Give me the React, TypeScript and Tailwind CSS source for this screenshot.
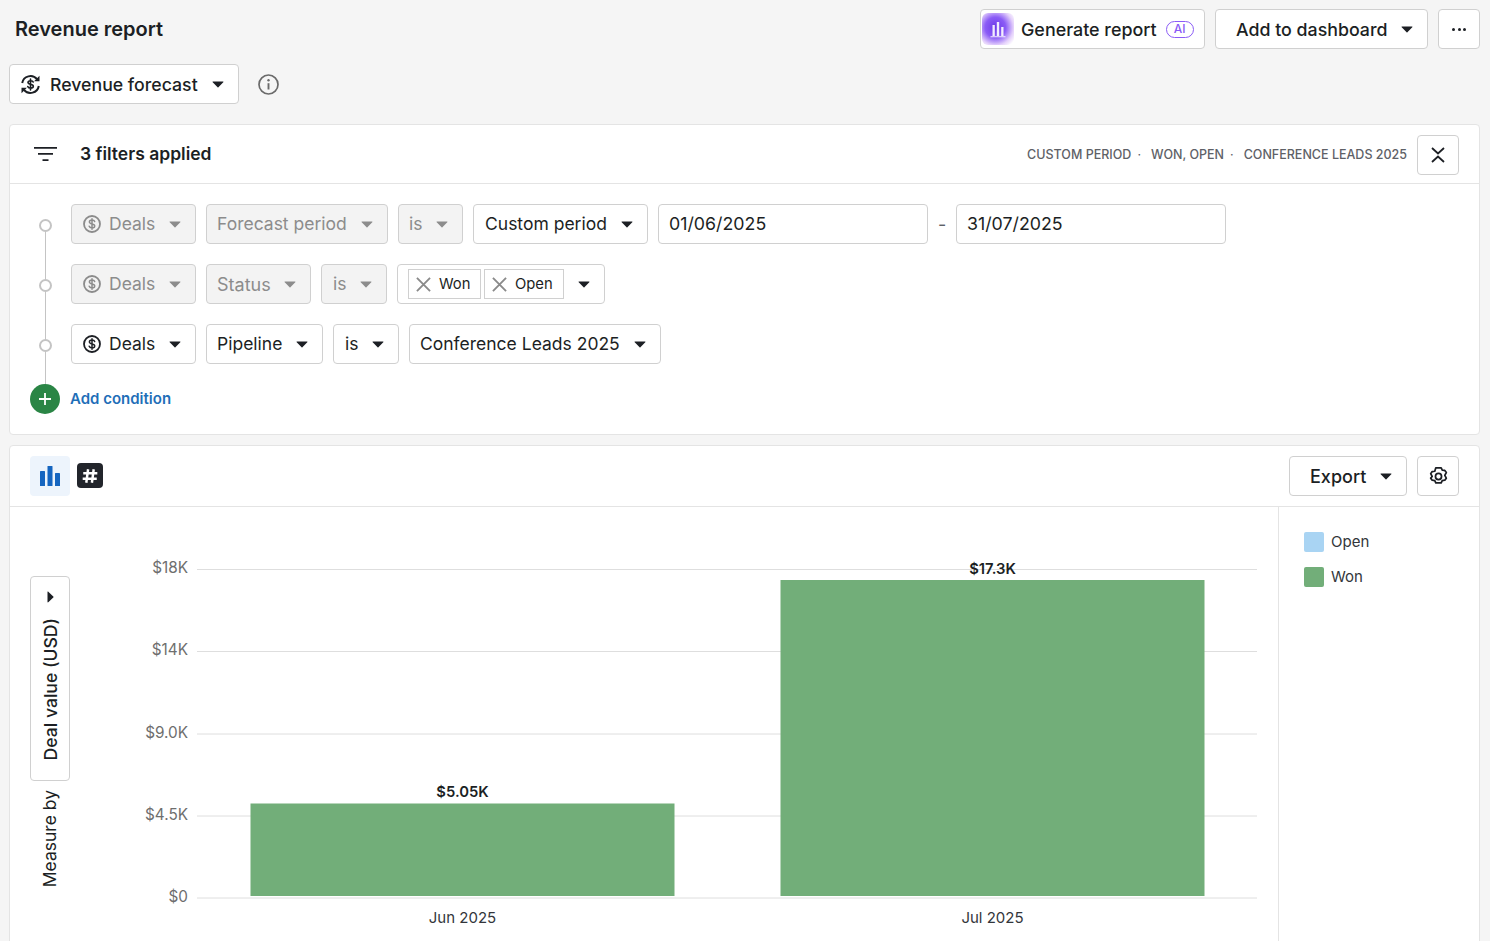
import React from "react";

const Caret = ({ muted = false }: { muted?: boolean }) => (
  <svg width="12" height="7" viewBox="0 0 12 7" className="shrink-0">
    <path d="M1 .5h10c.4 0 .6.5.3.8L6.400 6.200a.6.6 0 0 1-.8 0L.7 1.300C.4 1 .6.5 1 .5z" fill={muted ? "#8c8c8c" : "#1c1f24"} />
  </svg>
);

const DollarCircle = ({ muted = false }: { muted?: boolean }) => {
  const c = muted ? "#8c8c8c" : "#1c1f24";
  return (
    <svg width="18" height="18" viewBox="0 0 18 18" fill="none" className="shrink-0">
      <circle cx="9" cy="9" r="8" stroke={c} strokeWidth="1.800" />
      <path d="M11.700 6.600c-.3-.9-1.300-1.500-2.700-1.500-1.500 0-2.600.8-2.600 1.900 0 2.600 5.300 1.300 5.300 3.900 0 1.200-1.200 2-2.700 2-1.400 0-2.500-.6-2.800-1.600M9 3.700v10.600" stroke={c} strokeWidth="1.500" strokeLinecap="round" />
    </svg>
  );
};

const Pill = ({ children, muted = false, className = "" }: { children: React.ReactNode; muted?: boolean; className?: string }) => (
  <div
    className={
      "h-10 flex items-center rounded border border-[#d0d0d0] text-[17.5px] shrink-0 " +
      (muted ? "bg-[#f3f3f3] text-[#8c8c8c] " : "bg-white text-[#1c1f24] ") +
      className
    }
  >
    {children}
  </div>
);

const Dot = () => <div className="w-[13px] h-[13px] rounded-full border-2 border-[#c4c4c4] bg-white shrink-0" />;

const X = ({ size = 15, color = "#8a8a8a", w = 2 }: { size?: number; color?: string; w?: number }) => (
  <svg width={size} height={size} viewBox="0 0 16 16" fill="none" className="shrink-0">
    <path d="M1 1l14 14M15 1L1 15" stroke={color} strokeWidth={w} />
  </svg>
);

const Row = ({ children, mb = true }: { children: React.ReactNode; mb?: boolean }) => (
  <div className={"flex items-center gap-2.5 " + (mb ? "mb-5" : "")}>{children}</div>
);

const Chart = () => {
  const ticks = [
    ["$18K", 570, 573],
    ["$14K", 652, 655],
    ["$9.0K", 734, 738],
    ["$4.5K", 816, 820],
    ["$0", 898, 902],
  ] as const;
  return (
    <svg width="1208" height="434" viewBox="70 507 1208 434" className="block shrink-0" style={{ fontFamily: "Inter, sans-serif" }}>
      {ticks.map(([t, y, ty]) => (
        <g key={t}>
          <line x1="197" x2="1257" y1={y - 0.5 + (y > 700 ? 0.5 : 0)} y2={y - 0.5 + (y > 700 ? 0.5 : 0)} stroke="#dedede" strokeWidth="1" />
          <text x="188" y={ty} textAnchor="end" fontSize="15.300" fill="#6e6e6e">{t}</text>
        </g>
      ))}
      <rect x="250.500" y="803.500" width="424" height="92.500" fill="#72ae79" />
      <rect x="780.500" y="580" width="424" height="316" fill="#72ae79" />
      <text x="462.500" y="797" textAnchor="middle" fontSize="14.800" fontWeight="600" fill="#1c1f24">$5.05K</text>
      <text x="992.500" y="574" textAnchor="middle" fontSize="14.800" fontWeight="600" fill="#1c1f24">$17.3K</text>
      <text x="462.500" y="923" textAnchor="middle" fontSize="15" fill="#33363b">Jun 2025</text>
      <text x="992.500" y="923" textAnchor="middle" fontSize="15" fill="#33363b">Jul 2025</text>
    </svg>
  );
};

export default function App() {
  return (
    <div className="w-[1490px] h-[941px] overflow-hidden bg-[#f5f5f5] text-[#1c1f24] font-['Inter',sans-serif]">
      {/* Title row */}
      <div className="flex items-center pt-[9px] pl-[15px] pr-[10px] h-[49px]">
        <h1 className="text-[20px] font-semibold leading-none flex-1">Revenue report</h1>
        <div className="flex items-center gap-2.5">
          <div className="h-10 w-[225px] flex items-center rounded border border-[#d0d0d0] bg-white font-medium text-[17.900px] pl-[1px]">
            <div className="w-[32px] h-[32px] rounded-[6px] bg-[radial-gradient(circle_at_42%_45%,#6d3ae8_0%,#8b5cf6_40%,#e4d0fb_70%,#ffffff_90%)] flex items-center justify-center shrink-0">
              <svg width="18" height="18" viewBox="0 0 18 18">
                <path d="M3.500 5h2.300v11H3.500zM7.800 2h2.400v14H7.800zM12.200 7h2.300v9h-2.300zM1.500 16.200h15v1h-15z" fill="#fff" opacity=".9" />
              </svg>
            </div>
            <span className="ml-[7px] pt-[2px]">Generate report</span>
            <span className="ml-[9px] w-[28px] h-[17px] rounded-full border border-[#8b5cf6] text-[#8b5cf6] text-[12px] font-medium flex items-center justify-center leading-none">AI</span>
          </div>
          <div className="h-10 w-[213px] flex items-center justify-between rounded border border-[#d0d0d0] bg-white font-medium text-[17.800px] pl-[20px] pr-[14px]">
            <span className="pt-[2px]">Add to dashboard</span>
            <Caret />
          </div>
          <div className="h-10 w-[42px] flex items-center justify-center rounded border border-[#d0d0d0] bg-white gap-[2.500px]">
            <span className="w-[3px] h-[3px] rounded-full bg-[#1c1f24]" />
            <span className="w-[3px] h-[3px] rounded-full bg-[#1c1f24]" />
            <span className="w-[3px] h-[3px] rounded-full bg-[#1c1f24]" />
          </div>
        </div>
      </div>

      {/* Report type row */}
      <div className="flex items-center gap-[19px] mt-[15px] pl-[9px]">
        <div className="h-10 w-[230px] flex items-center rounded border border-[#d0d0d0] bg-white font-medium text-[17.700px] pl-[10px] pr-[14px]">
          <svg width="21" height="21" viewBox="0 0 21 21" fill="none" className="shrink-0">
            <path d="M2.200 9a8.400 8.400 0 0 1 14.800-3.800M18.800 12a8.400 8.400 0 0 1-14.800 3.800" stroke="#1c1f24" strokeWidth="2" />
            <path d="M19.500 1.800v5.400h-5.400zM1.500 19.200v-5.400h5.400z" fill="#1c1f24" />
            <path d="M13.200 8c-.3-.9-1.300-1.300-2.600-1.300-1.500 0-2.600.7-2.600 1.800 0 2.400 5.300 1.200 5.300 3.700 0 1.200-1.200 1.900-2.700 1.900-1.400 0-2.400-.6-2.800-1.500M10.500 5v11" stroke="#1c1f24" strokeWidth="1.600" strokeLinecap="round" />
          </svg>
          <span className="ml-[9px] flex-1 pt-[2px]">Revenue forecast</span>
          <Caret />
        </div>
        <svg width="21" height="21" viewBox="0 0 21 21" fill="none">
          <circle cx="10.500" cy="10.500" r="9.500" stroke="#6a6a6a" strokeWidth="1.700" />
          <path d="M10.500 9.200v6.300" stroke="#6a6a6a" strokeWidth="1.900" />
          <circle cx="10.500" cy="6.300" r="1.200" fill="#6a6a6a" />
        </svg>
      </div>

      {/* Filter card */}
      <section className="mt-5 mx-[9px] w-[1471px] h-[311px] bg-white border border-[#e4e4e4] rounded">
        <div className="h-[59px] flex items-center border-b border-[#e4e4e4] pl-6 pr-5">
          <svg width="23" height="16" viewBox="0 0 23 16" className="shrink-0">
            <path d="M0 1h23v1.800H0zM4 7h15v1.800H4zM8.500 13.200h6V15h-6z" fill="#1c1f24" />
          </svg>
          <span className="ml-[23px] text-[17.500px] font-semibold flex-1">3 filters applied</span>
          <span className="text-[12.500px] font-medium text-[#5e6167] mt-[2px]">CUSTOM PERIOD</span>
          <span className="text-[12.500px] text-[#5e6167] mt-[2px] mx-[6px]">·</span>
          <span className="text-[12.500px] font-medium text-[#5e6167] mt-[2px] ml-[4px]">WON, OPEN</span>
          <span className="text-[12.500px] text-[#5e6167] mt-[2px] mx-[6px]">·</span>
          <span className="text-[12.500px] font-medium text-[#5e6167] mt-[2px] ml-[4px]">CONFERENCE LEADS 2025</span>
          <div className="ml-[10px] mt-[2px] w-[42px] h-10 rounded border border-[#d0d0d0] flex items-center justify-center">
            <svg width="14" height="16" viewBox="0 0 14 16" fill="none">
              <path d="M1 1l6 5.500 6-5.500M1 15l6-5.500 6 5.500" stroke="#1c1f24" strokeWidth="1.800" />
            </svg>
          </div>
        </div>

        <div className="flex pt-5 pl-5">
          {/* Timeline rail */}
          <div className="relative w-[30px] shrink-0 flex flex-col items-center mr-[11px] h-[210px]">
            <div className="absolute left-[15px] top-[22px] bottom-[16px] w-px bg-[#c4c4c4]" />
            <div className="relative mt-[15px]"><Dot /></div>
            <div className="relative mt-[47px]"><Dot /></div>
            <div className="relative mt-[47px]"><Dot /></div>
            <div className="relative mt-[32px] w-[30px] h-[30px] rounded-full bg-[#2a8545] flex items-center justify-center">
              <svg width="14" height="14" viewBox="0 0 14 14"><path d="M7 1v12M1 7h12" stroke="#fff" strokeWidth="1.800" /></svg>
            </div>
          </div>

          <div className="flex-1">
            <Row>
              <Pill muted className="w-[125px] pl-[11px] pr-[14px]"><DollarCircle muted /><span className="ml-[8px] flex-1">Deals</span><Caret muted /></Pill>
              <Pill muted className="w-[182px] pl-[10px] pr-[14px]"><span className="flex-1">Forecast period</span><Caret muted /></Pill>
              <Pill muted className="w-[65px] pl-[10px] pr-[14px]"><span className="flex-1">is</span><Caret muted /></Pill>
              <Pill className="w-[175px] pl-[11px] pr-[14px]"><span className="flex-1">Custom period</span><Caret /></Pill>
              <Pill className="w-[270px] pl-[10px] text-[17.800px]">01/06/2025</Pill>
              <span className="text-[18px] text-[#5e6167] w-[8px] text-center">-</span>
              <Pill className="w-[270px] pl-[10px] text-[17.800px]">31/07/2025</Pill>
            </Row>
            <Row>
              <Pill muted className="w-[125px] pl-[11px] pr-[14px]"><DollarCircle muted /><span className="ml-[8px] flex-1">Deals</span><Caret muted /></Pill>
              <Pill muted className="w-[105px] pl-[10px] pr-[14px]"><span className="flex-1 text-[18px]">Status</span><Caret muted /></Pill>
              <Pill muted className="w-[66px] pl-[11px] pr-[14px]"><span className="flex-1">is</span><Caret muted /></Pill>
              <Pill className="w-[208px] pl-[10px] pr-[14px]">
                <div className="h-[30px] w-[73px] border border-[#d0d0d0] flex items-center pl-[7px] text-[14.800px] shrink-0"><X /><span className="ml-[8px]">Won</span></div>
                <div className="h-[30px] w-[80px] border border-[#d0d0d0] flex items-center pl-[7px] text-[14.800px] shrink-0 ml-[3px]"><X /><span className="ml-[8px]">Open</span></div>
                <span className="flex-1" />
                <Caret />
              </Pill>
            </Row>
            <Row>
              <Pill className="w-[125px] pl-[11px] pr-[14px]"><DollarCircle /><span className="ml-[8px] flex-1">Deals</span><Caret /></Pill>
              <Pill className="w-[117px] pl-[10px] pr-[14px]"><span className="flex-1">Pipeline</span><Caret /></Pill>
              <Pill className="w-[66px] pl-[11px] pr-[14px]"><span className="flex-1">is</span><Caret /></Pill>
              <Pill className="w-[252px] pl-[10px] pr-[14px]"><span className="flex-1">Conference Leads 2025</span><Caret /></Pill>
            </Row>
            <div className="h-[30px] -ml-px flex items-center text-[15px] font-semibold text-[#1f6fb8]">Add condition</div>
          </div>
        </div>
      </section>

      {/* Chart card */}
      <section className="mt-[10px] mx-[9px] w-[1471px] h-[500px] bg-white border border-[#e4e4e4] rounded overflow-hidden">
        <div className="h-[61px] flex items-center border-b border-[#e4e4e4] pl-5 pr-5">
          <div className="w-10 h-10 rounded bg-[#edf4fc] flex items-center justify-center">
            <svg width="20" height="20" viewBox="0 0 20 20" fill="#1565c0">
              <rect x="0" y="5" width="5" height="15" rx=".6" />
              <rect x="7.500" y="0" width="5" height="20" rx=".6" />
              <rect x="15" y="7" width="5" height="13" rx=".6" />
            </svg>
          </div>
          <div className="ml-[7px] w-[26px] h-[25px] mb-[1px] rounded bg-[#22252b] flex items-center justify-center">
            <svg width="18" height="18" viewBox="0 0 16 16" fill="none">
              <path d="M6.300 2L4.700 14M11.300 2L9.700 14M2 5.600h12.500M1.500 10.400H14" stroke="#fff" strokeWidth="2.200" />
            </svg>
          </div>
          <div className="flex-1" />
          <div className="h-10 w-[118px] flex items-center justify-between rounded border border-[#d0d0d0] text-[18px] font-medium pl-[20px] pr-[14px]">
            <span>Export</span>
            <Caret />
          </div>
          <div className="ml-[10px] w-[42px] h-10 rounded border border-[#d0d0d0] flex items-center justify-center">
            <svg width="21" height="21" viewBox="0 0 18 18" fill="none">
              <path d="M6.700 1.500h4.600l.9 2 2.200.3 1.300 1.800-1.300 2.400 1.300 2.400-1.300 1.800-2.200.3-.9 2H6.700l-.9-2-2.200-.3-1.300-1.800L3.600 9 2.300 6.600l1.300-1.800 2.200-.3z" stroke="#1c1f24" strokeWidth="1.500" strokeLinejoin="round" />
              <circle cx="9" cy="9" r="2.600" stroke="#1c1f24" strokeWidth="1.500" />
            </svg>
          </div>
        </div>
        <div className="flex h-[438px]">
          <div className="w-[60px] shrink-0 flex flex-col items-center pl-[20px] pt-[69px]">
            <div className="w-10 h-[205px] shrink-0 rounded border border-[#d0d0d0] flex flex-col items-center pt-[14px] bg-white">
              <svg width="7" height="12" viewBox="0 0 7 12" className="shrink-0"><path d="M.5 1v10c0 .4.500.6.8.3l5-4.700a.8.8 0 0 0 0-1.200l-5-4.700C1 .4.500.6.500 1z" fill="#1c1f24" /></svg>
              <span className="[writing-mode:vertical-rl] rotate-180 text-[17.600px] font-medium mt-[15px] ml-[2px] leading-none whitespace-nowrap">Deal value (USD)</span>
            </div>
            <span className="[writing-mode:vertical-rl] rotate-180 text-[17.500px] mt-[9px] leading-none whitespace-nowrap">Measure by</span>
          </div>
          <Chart />
          <div className="flex-1 border-l border-[#e4e4e4] pl-[25px] pt-[25px] text-[15px] text-[#33363b]">
            <div className="flex items-center h-5">
              <span className="w-5 h-5 rounded-[2px] bg-[#a9d4f3]" />
              <span className="ml-[7px]">Open</span>
            </div>
            <div className="flex items-center h-5 mt-[15px]">
              <span className="w-5 h-5 rounded-[2px] bg-[#72ae79]" />
              <span className="ml-[7px]">Won</span>
            </div>
          </div>
        </div>
      </section>
    </div>
  );
}
